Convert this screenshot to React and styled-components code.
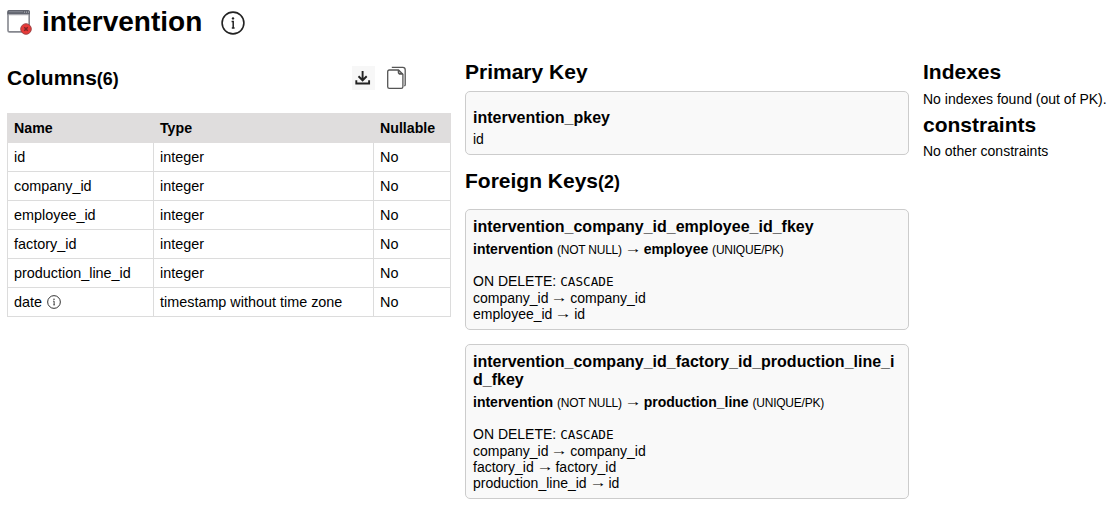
import React from "react";
import styled, { createGlobalStyle } from "styled-components";

const GlobalStyle = createGlobalStyle`
  * { box-sizing: border-box; }
  body {
    margin: 0;
    background: #fff;
    color: #000;
    font: 14px/16px "Liberation Sans", Arial, sans-serif;
    overflow: hidden;
  }
`;

const Page = styled.main`
  width: 1108px;
  height: 514px;
  padding-left: 7px;
  overflow: hidden;
`;

const Header = styled.header`
  display: flex;
  height: 60px;
  padding-top: 6px;
`;

const Title = styled.h1`
  margin: 0 0 0 10px;
  width: 179px;
  font-size: 28px;
  line-height: 32px;
`;

const TableGlyph = styled.svg`
  display: block;
  width: 25px;
  height: 26px;
  margin-top: 3px;
`;

const TitleInfo = styled.div`
  padding-top: 5px;
`;

const Content = styled.div`
  display: grid;
  grid-template-columns: 444px 444px 190px;
  column-gap: 14px;
  align-items: start;
`;

const ColumnsHeader = styled.div`
  display: flex;
  height: 53px;
  padding-top: 6px;
`;

const Heading = styled.h2`
  margin: 0;
  font-size: 21px;
  line-height: 24px;
  white-space: nowrap;
`;

const Count = styled.span`
  font-size: 17.9px;
`;

const Actions = styled.div`
  display: flex;
  gap: 12px;
  margin-left: auto;
  margin-right: 44px;
`;

const ActionButton = styled.button`
  display: block;
  width: ${(p) => p.$width}px;
  height: 24px;
  padding: 0;
  border: 0;
  background: ${(p) => p.$bg || "transparent"};
  svg { display: block; }
`;

const Table = styled.table`
  width: 444px;
  table-layout: fixed;
  border-collapse: collapse;
  font-size: 14.4px;
`;

const HeadCell = styled.th`
  width: ${(p) => p.$width}px;
  height: 29px;
  padding: 0 6px;
  background: #dfdddd;
  border: 1px solid #dfdddd;
  text-align: left;
  font-size: 14.2px;
`;

const Cell = styled.td`
  height: 29px;
  padding: 0 6px;
  border: 1px solid #dcdcdc;
`;

const CellContent = styled.span`
  display: flex;
  align-items: center;
  gap: 5px;
`;

const Card = styled.section`
  min-height: ${(p) => p.$height}px;
  padding: ${(p) => p.$top}px 7px 0;
  margin-bottom: 14px;
  border: 1px solid #ccc;
  border-radius: 5px;
  background: #f9f9f9;
`;

const KeyName = styled.h3`
  margin: 0 0 ${(p) => p.$gap}px;
  font-size: 16px;
  line-height: 18px;
  overflow-wrap: anywhere;
`;

const Relation = styled.div`
  margin-bottom: 15px;
`;

const Small = styled.span`
  font-size: 12px;
  letter-spacing: -0.23px;
`;

const Arrow = styled.span`
  display: inline-block;
  transform: translateY(-1px) scaleX(1.22);
`;

const Rule = styled.div`
  line-height: 17px;
`;

const Code = styled.code`
  font: 12.7px/16px "DejaVu Sans Mono", monospace;
`;

const ForeignHeading = styled(Heading)`
  margin-bottom: 15px;
`;

const PrimaryHeading = styled(Heading)`
  margin-bottom: 7px;
`;

const Note = styled.p`
  margin: ${(p) => p.$top}px 0 6px;
  white-space: nowrap;
`;

const InfoIcon = ({ size }) => (
  <svg width={size} height={size} viewBox="0 0 24 24" fill="none" stroke="#222">
    <circle cx="12" cy="12" r="10.9" strokeWidth="1.6" />
    <circle cx="12" cy="7.4" r="1.2" fill="#222" stroke="none" />
    <path d="M10.6 10.5h1.6v6.2M10.8 16.9h2.8" strokeWidth="1.5" />
  </svg>
);

const TableIcon = () => (
  <TableGlyph viewBox="0 0 25 26" fill="none">
    <rect x="1" y="1.7" width="21.2" height="21.2" rx="1.5" fill="#fff" stroke="#85878e" strokeWidth="1.6" />
    <path d="M.3 5.5V3Q.3 1 2.3 1h18.6Q23 1 23 3v2.5Z" fill="#62656f" />
    <path d="M1 5.8h21.3" stroke="#a3a5ab" strokeWidth=".8" />
    <path d="M2 2.7h14" stroke="#858892" strokeWidth="1" />
    <path d="M17 3.1h1M19 3.1h1M21 3.1h1" stroke="#bfc0c5" />
    <circle cx="19" cy="20" r="5.3" fill="#e63a38" stroke="#993f42" strokeWidth=".9" />
    <path d="m17.3 18.3 3.4 3.4m0-3.4-3.4 3.4" stroke="#7c2528" strokeWidth="1.4" />
  </TableGlyph>
);

const DownloadIcon = () => (
  <svg width="23" height="24" viewBox="0 0 23 24" fill="none" stroke="#222" strokeWidth="1.9">
    <path d="M10.6 5v9M6.5 10.3l4.1 4 4.1-4M4.3 14.2v3.3h12.8v-3.3" />
  </svg>
);

const CopyIcon = () => (
  <svg width="20" height="24" viewBox="0 0 20 24" fill="none" stroke="#555" strokeWidth="1.3">
    <path d="M4.8 1.4h11Q18.2 1.4 18.2 3.8v15q0 .9-.9 1.2" />
    <path d="M11.5 4H2.4Q.7 4 .7 5.7v15Q.7 22.4 2.4 22.4h11.8q1.7 0 1.7-1.7V8.2L11.5 4Z" />
    <path d="M11.5 4v1.9q0 2 2 2h2.3" strokeWidth="1.6" />
  </svg>
);

const fields = [
  ["id", "integer"],
  ["company_id", "integer"],
  ["employee_id", "integer"],
  ["factory_id", "integer"],
  ["production_line_id", "integer"],
  ["date", "timestamp without time zone"],
];

const foreignKeys = [
  {
    name: "intervention_company_id_employee_id_fkey",
    target: "employee",
    height: 121,
    pairs: [["company_id", "company_id"], ["employee_id", "id"]],
  },
  {
    name: "intervention_company_id_factory_id_production_line_id_fkey",
    target: "production_line",
    height: 155,
    pairs: [["company_id", "company_id"], ["factory_id", "factory_id"], ["production_line_id", "id"]],
  },
];

export default function App() {
  return (
    <Page>
      <GlobalStyle />
      <Header>
        <TableIcon />
        <Title>intervention</Title>
        <TitleInfo><InfoIcon size={24} /></TitleInfo>
      </Header>
      <Content>
        <div>
          <ColumnsHeader>
            <Heading>Columns<Count>(6)</Count></Heading>
            <Actions>
              <ActionButton $width={23} $bg="#f7f7f7" aria-label="Download"><DownloadIcon /></ActionButton>
              <ActionButton $width={20} aria-label="Copy"><CopyIcon /></ActionButton>
            </Actions>
          </ColumnsHeader>
          <Table>
            <thead>
              <tr>
                <HeadCell $width={146}>Name</HeadCell>
                <HeadCell $width={220}>Type</HeadCell>
                <HeadCell $width={77}>Nullable</HeadCell>
              </tr>
            </thead>
            <tbody>
              {fields.map(([name, type]) => (
                <tr key={name}>
                  <Cell>
                    <CellContent>{name}{name === "date" && <InfoIcon size={14} />}</CellContent>
                  </Cell>
                  <Cell>{type}</Cell>
                  <Cell>No</Cell>
                </tr>
              ))}
            </tbody>
          </Table>
        </div>
        <div>
          <PrimaryHeading>Primary Key</PrimaryHeading>
          <Card $height={64} $top={17}>
            <KeyName $gap={4}>intervention_pkey</KeyName>
            <div>id</div>
          </Card>
          <ForeignHeading>Foreign Keys<Count>(2)</Count></ForeignHeading>
          {foreignKeys.map((key) => (
            <Card key={key.name} $height={key.height} $top={8}>
              <KeyName $gap={5}>{key.name}</KeyName>
              <Relation>
                <b>intervention</b> <Small>(NOT NULL)</Small> <Arrow>→</Arrow> <b>{key.target}</b> <Small>(UNIQUE/PK)</Small>
              </Relation>
              <Rule>ON DELETE: <Code>CASCADE</Code></Rule>
              {key.pairs.map(([from, to]) => (
                <div key={from}>{from} <Arrow>→</Arrow> {to}</div>
              ))}
            </Card>
          ))}
        </div>
        <div>
          <Heading>Indexes</Heading>
          <Note $top={7}>No indexes found (out of PK).</Note>
          <Heading>constraints</Heading>
          <Note $top={6}>No other constraints</Note>
        </div>
      </Content>
    </Page>
  );
}
